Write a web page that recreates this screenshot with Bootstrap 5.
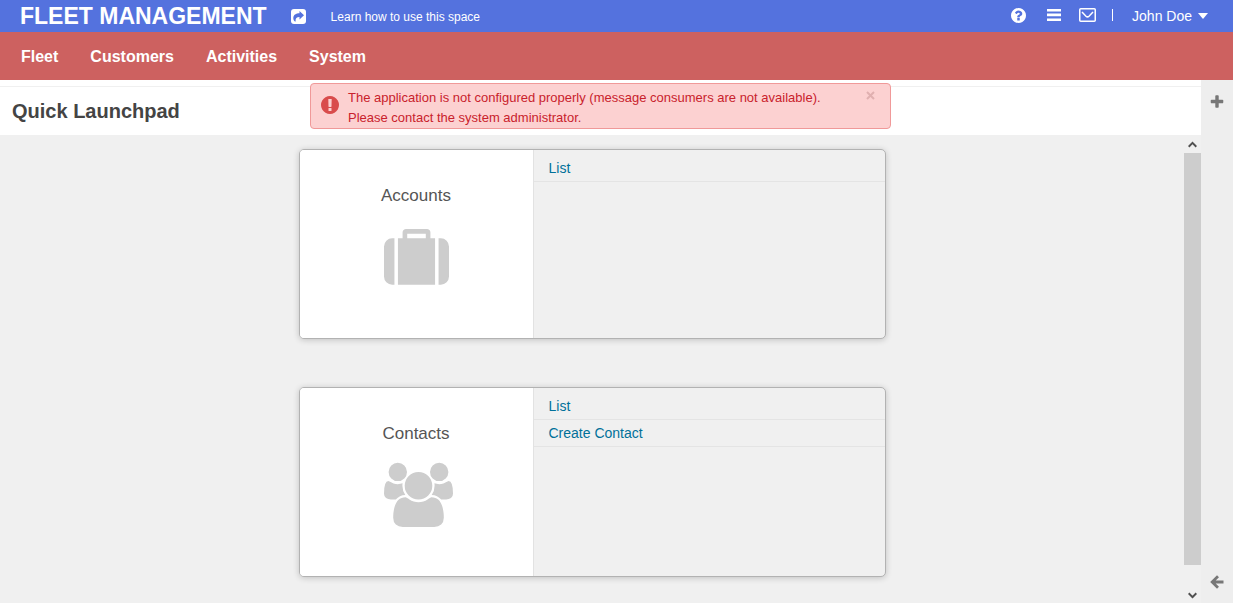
<!DOCTYPE html>
<html lang="en">
<head>
<meta charset="utf-8">
<meta name="viewport" content="width=device-width, initial-scale=1">
<title>Fleet Management</title>
<link href="https://cdn.jsdelivr.net/npm/bootstrap@5.3.0/dist/css/bootstrap.min.css" rel="stylesheet">
<style>
  body { font-family: "Liberation Sans", Arial, sans-serif; font-size: 14px; line-height: 20px; color: #444; background: #f0f0f0; }
  svg { display: block; fill: currentColor; }
  .topbar { height: 32px; padding-left: 20px; padding-right: 25px; background: #5472de; color: #fff; }
  .topbar a, .topbar button, .mainnav a { color: #fff; text-decoration: none; }
  .brand { font-size: 23px; line-height: 32px; font-weight: bold; margin-right: 24px; }
  .learn { font-size: 12px; margin-left: 25px; padding-top: 1px; }
  .plain { border: 0; background: none; padding: 0; color: inherit; }
  .tools { gap: 18px; }
  .tools > :not(.user) { margin-bottom: 2px; }
  .tools .help { margin-right: 3px; }
  .tools .divider { width: 1px; height: 12px; background: #fff; margin-left: -2px; margin-right: 1px; }
  .user { gap: 6px; }
  .mainnav { min-height: 48px; gap: 32px; padding: 1px 21px 0; background: #cd6160; font-size: 16px; font-weight: bold; }
  .workspace, .content { min-height: 0; }
  .pagehead { border-top: 6px solid #fff; background: #fff; }
  .pagehead h1 { margin: 0; padding: 12px; border-top: 1px solid #f0f0f0; font-size: 20px; line-height: 24px; font-weight: bold; color: #444; }
  .notice { top: 3px; left: 0; right: 0; margin: 0 auto; width: 581px; max-width: 100%; min-height: 46px; padding: 4px 15px 0 10px; gap: 9px; font-size: 13px; color: #c9222c; background: #fcd1d1; border: 1px solid #f09999; border-radius: 4px; }
  .notice .sign { color: #d94c4c; margin-top: 8px; }
  .notice .dismiss { color: #e0b0b0; padding-top: 3px; }
  .tile { width: 587px; max-width: 100%; min-height: 190px; border: 1px solid #b2b2b2; border-radius: 5px; box-shadow: 0 1px 6px rgba(0,0,0,.2); overflow: hidden; background: #f0f0f0; }
  .tiles { padding-top: 14px; gap: 48px; }
  .tile-face { width: 40%; padding-top: 36px; gap: 23px; background: #fff; border-right: 1px solid #e2e2e2; }
  .tile-face h2 { margin: 0; font-size: 17px; line-height: 20px; font-weight: normal; color: #555; }
  .tile-icon { width: 65px; height: 65px; color: #cdcdcd; }
  .tile-icon svg { overflow: visible; }
  .tile-links { padding-top: 5px; }
  .tile-links li { padding: 3px 15px; border-bottom: 1px solid #e4e4e4; }
  .tile-links a { color: #00709a; text-decoration: none; }
  .scroller { width: 17px; color: #505050; }
  .scroller .cap { height: 18px; }
  .scroller .thumb { background: #cdcdcd; }
  .scroller .foot { height: 38px; padding-top: 22px; }
  .siderail { width: 32px; padding: 14px 0; background: #eee; color: #777; }
</style>
</head>
<body>
<div class="d-flex flex-column vh-100 overflow-hidden">
  <header class="topbar d-flex align-items-center flex-shrink-0">
    <a class="brand text-nowrap" href="#">FLEET MANAGEMENT</a>
    <a href="#" aria-label="Share"><svg width="15" height="15" viewBox="0 0 15 15"><rect width="15" height="15" rx="3"/><path fill="#5472de" d="M8.500 2v2.200C5 4.200 2.300 5.800 2.300 9c0 1.700.8 2.800 1.700 3.600.4.200.6 0 .6-.4C4.400 9.300 5.500 8 8.500 8v2.400L13 6.200z"/></svg></a>
    <a class="learn text-nowrap" href="#">Learn how to use this space</a>
    <div class="tools d-flex align-items-center ms-auto">
      <a class="help" href="#" aria-label="Help"><svg width="15" height="15" viewBox="128 128 1536 1536"><path d="M1024 1376v-192q0-14-9-23t-23-9h-192q-14 0-23 9t-9 23v192q0 14 9 23t23 9h192q14 0 23-9t9-23zm256-672q0-88-55.500-163t-138.500-116-170-41q-243 0-371 213-15 24 8 42l132 100q7 6 19 6 16 0 25-12 53-68 86-92 34-24 86-24 48 0 85.500 26t37.500 59q0 38-20 61t-68 45q-63 28-115.500 86.500t-52.500 125.500v36q0 14 9 23t23 9h192q14 0 23-9t9-23q0-19 21.500-49.500t54.500-49.500q32-18 49-28.500t46-35 44.500-48 28-60.500 12.500-81zm384 192q0 209-103 385.500t-279.500 279.500-385.500 103-385.500-103-279.500-279.500-103-385.500 103-385.500 279.500-279.500 385.500-103 385.500 103 279.500 279.500 103 385.500z"/></svg></a>
      <button class="plain" type="button" aria-label="Menu"><svg width="14" height="12" viewBox="0 0 14 12"><path d="M0 0h14v2.600H0zM0 4.600h14v2.600H0zM0 9.400h14V12H0z"/></svg></button>
      <a href="#" aria-label="Messages"><svg width="17" height="14" viewBox="0 0 17 14"><g fill="none" stroke="currentColor" stroke-width="1.500"><rect x=".75" y=".75" width="15.500" height="12.500" rx="1"/><path d="M3 4l4 4.200q1.500 1.300 3 0L14 4"/></g></svg></a>
      <span class="divider"></span>
      <button class="plain user d-flex align-items-center text-nowrap" type="button">John Doe <svg width="10" height="6" viewBox="0 0 10 6"><path d="M0 0h10L5 6z"/></svg></button>
    </div>
  </header>
  <nav class="mainnav d-flex align-items-center flex-shrink-0">
    <a href="#">Fleet</a>
    <a href="#">Customers</a>
    <a href="#">Activities</a>
    <a href="#">System</a>
  </nav>
  <div class="workspace d-flex flex-grow-1">
    <main class="d-flex flex-column flex-grow-1 position-relative">
      <div class="pagehead"><h1>Quick Launchpad</h1></div>
      <div class="notice position-absolute d-flex align-items-start" role="alert">
        <svg class="sign flex-shrink-0" width="18" height="18" viewBox="128 128 1536 1536"><path d="M896 128q209 0 385.500 103t279.500 279.500 103 385.500-103 385.500-279.500 279.500-385.500 103-385.500-103-279.500-279.500-103-385.500 103-385.500 279.500-279.500 385.500-103zm128 1247v-190q0-14-9-23.500t-22-9.500h-192q-13 0-23 10t-10 23v190q0 13 10 23t23 10h192q13 0 22-9.500t9-23.500zm-2-344l18-621q0-12-10-18-10-8-24-8h-220q-14 0-24 8-10 6-10 18l17 621q0 10 10 17.500t24 7.500h185q14 0 23.500-7.500t10.500-17.500z"/></svg>
        <div class="flex-grow-1">The application is not configured properly (message consumers are not available).<br>Please contact the system administrator.</div>
        <button class="plain dismiss" type="button" aria-label="Close"><svg width="9" height="9" viewBox="0 0 9 9"><path d="M1 1l7 7M8 1L1 8" stroke="currentColor" stroke-width="2"/></svg></button>
      </div>
      <div class="content d-flex flex-grow-1">
        <div class="tiles d-flex flex-column align-items-center flex-grow-1">
          <section class="tile d-flex flex-shrink-0">
            <div class="tile-face d-flex flex-column align-items-center flex-shrink-0">
              <h2>Accounts</h2>
              <div class="tile-icon"><svg width="65" height="65" viewBox="0 0 1792 1792"><path d="M640 256h512v-128h-512v128zm-352 0v1280h-64q-92 0-158-66t-66-158v-832q0-92 66-158t158-66h64zm1120 0v1280h-1024v-1280h128v-160q0-40 28-68t68-28h576q40 0 68 28t28 68v160h128zm384 224v832q0 92-66 158t-158 66h-64v-1280h64q92 0 158 66t66 158z"/></svg></div>
            </div>
            <ul class="tile-links list-unstyled flex-grow-1 mb-0">
              <li><a href="#">List</a></li>
            </ul>
          </section>
          <section class="tile d-flex flex-shrink-0">
            <div class="tile-face d-flex flex-column align-items-center flex-shrink-0">
              <h2>Contacts</h2>
              <div class="tile-icon"><svg width="69" height="65" viewBox="0 128 1920 1792"><path d="M593 896q-162 5-265 128h-134q-82 0-138-40.500t-56-118.500q0-353 124-353 6 0 43.500 21t97.500 42.500 119 21.500q67 0 133-23-5 37-5 66 0 139 81 256zm1071 637q0 120-73 189.500t-194 69.500h-874q-121 0-194-69.500t-73-189.500q0-53 3.500-103.500t14-109 26.500-108.500 43-97.500 62-81 85.500-53.500 111.500-20q10 0 43 21.500t73 48 107 48 135 21.500 135-21.500 107-48 73-48 43-21.500q61 0 111.500 20t85.500 53.500 62 81 43 97.500 26.500 108.500 14 109 3.500 103.500zm-1024-1277q0 106-75 181t-181 75-181-75-75-181 75-181 181-75 181 75 75 181zm704 384q0 159-112.500 271.500t-271.500 112.500-271.500-112.500-112.500-271.500 112.500-271.500 271.500-112.500 271.500 112.500 112.500 271.500zm576 225q0 78-56 118.500t-138 40.500h-134q-103-123-265-128 81-117 81-256 0-29-5-66 66 23 133 23 59 0 119-21.500t97.500-42.500 43.500-21q124 0 124 353zm-128-609q0 106-75 181t-181 75-181-75-75-181 75-181 181-75 181 75 75 181z"/></svg></div>
            </div>
            <ul class="tile-links list-unstyled flex-grow-1 mb-0">
              <li><a href="#">List</a></li>
              <li><a href="#">Create Contact</a></li>
            </ul>
          </section>
        </div>
        <div class="scroller d-flex flex-column align-items-center flex-shrink-0" aria-hidden="true">
          <div class="cap d-flex align-items-center"><svg width="9" height="7" viewBox="0 0 9 7"><path d="M.7 5.700L4.500 1.900l3.800 3.800" fill="none" stroke="currentColor" stroke-width="2"/></svg></div>
          <div class="thumb w-100 flex-grow-1"></div>
          <div class="foot d-flex align-items-center"><svg width="9" height="7" viewBox="0 0 9 7"><path d="M.7 1.300l3.800 3.800 3.800-3.800" fill="none" stroke="currentColor" stroke-width="2"/></svg></div>
        </div>
      </div>
    </main>
    <aside class="siderail d-flex flex-column align-items-center justify-content-between flex-shrink-0">
      <button class="plain" type="button" aria-label="Add"><svg width="16" height="16" viewBox="0 0 1792 1792"><path d="M1600 736v192q0 40-28 68t-68 28h-416v416q0 40-28 68t-68 28h-192q-40 0-68-28t-28-68v-416h-416q-40 0-68-28t-28-68v-192q0-40 28-68t68-28h416v-416q0-40 28-68t68-28h192q40 0 68 28t28 68v416h416q40 0 68 28t28 68z"/></svg></button>
      <button class="plain" type="button" aria-label="Expand panel"><svg width="14" height="14" viewBox="0 0 14 14"><path d="M8 1.300L2.200 7 8 12.700M2.500 7H13.500" fill="none" stroke="currentColor" stroke-width="2.800"/></svg></button>
    </aside>
  </div>
</div>
<script src="https://cdn.jsdelivr.net/npm/bootstrap@5.3.0/dist/js/bootstrap.bundle.min.js"></script>
</body>
</html>
